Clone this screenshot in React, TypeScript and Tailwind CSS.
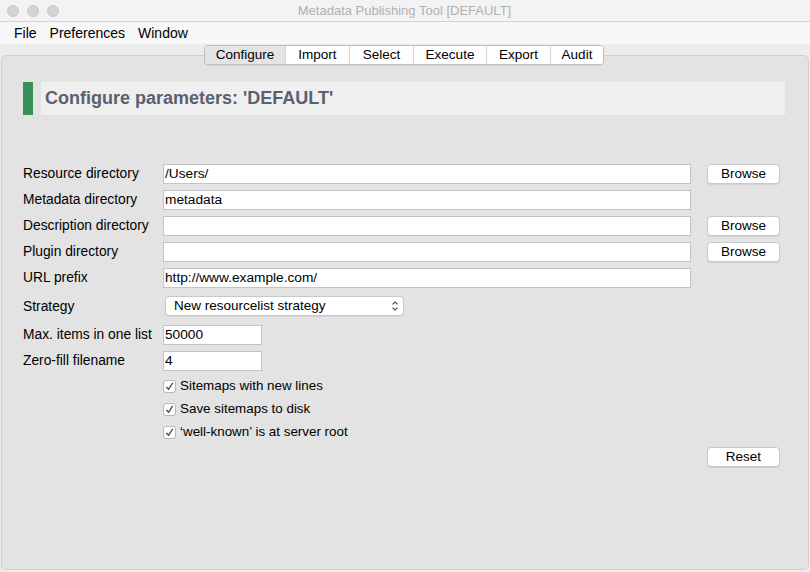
import React from 'react';

const font = { fontFamily: '"Liberation Sans", Arial, sans-serif' };

const tabs = ['Configure', 'Import', 'Select', 'Execute', 'Export', 'Audit'];
const tabWidths = ['w-[80px]', 'w-[64px]', 'w-[64px]', 'w-[73px]', 'w-[64px]', 'w-[53px]'];

function Field({ value = '', wide = true }: { value?: string; wide?: boolean }) {
  return (
    <div
      className={`h-[20px] bg-white border border-[#c4c4c4] px-[1px] flex items-center text-[13.7px] text-black ${
        wide ? 'w-[528px]' : 'w-[99px]'
      }`}
    >
      {value}
    </div>
  );
}

function MacButton({ label }: { label: string }) {
  return (
    <div className="h-[20px] w-[73px] bg-white border border-[#c8c8c8] rounded-[4px] shadow-[0_1px_0_rgba(0,0,0,0.08)] flex items-center justify-center text-[13.5px] text-black">
      {label}
    </div>
  );
}

function Check({ label }: { label: string }) {
  return (
    <div className="flex items-center h-[23px]">
      <div className="w-[13px] h-[13px] bg-white border border-[#b8b8b8] rounded-[3px] flex items-center justify-center">
        <svg viewBox="0 0 12 12" className="w-[11px] h-[11px]">
          <path d="M2.5 6.5 L5 9 L9.5 2" fill="none" stroke="#444" strokeWidth="1.4" />
        </svg>
      </div>
      <span className="ml-[4px] text-[13.4px] text-black">{label}</span>
    </div>
  );
}

export default function App() {
  const rows: { label: string; value: string; browse: boolean }[] = [
    { label: 'Resource directory', value: '/Users/', browse: true },
    { label: 'Metadata directory', value: 'metadata', browse: false },
    { label: 'Description directory', value: '', browse: true },
    { label: 'Plugin directory', value: '', browse: true },
    { label: 'URL prefix', value: 'http://www.example.com/', browse: false },
  ];

  return (
    <div className="w-[810px] h-[572px] bg-[#ececec] flex flex-col overflow-hidden" style={font}>
      {/* title bar */}
      <div className="h-[22px] bg-[#f3f3f3] border-b border-[#d2d2d2] flex items-center relative shrink-0">
        <div className="flex gap-[8px] pl-[7px]">
          <span className="w-[12px] h-[12px] rounded-full bg-[#d4d4d4] border border-[#c8c8c8]" />
          <span className="w-[12px] h-[12px] rounded-full bg-[#d4d4d4] border border-[#c8c8c8]" />
          <span className="w-[12px] h-[12px] rounded-full bg-[#d4d4d4] border border-[#c8c8c8]" />
        </div>
        <div className="flex-1 text-center text-[13px] text-[#b0b0b0] pr-[60px]">
          Metadata Publishing Tool [DEFAULT]
        </div>
      </div>

      {/* menu bar */}
      <div className="h-[22px] bg-[#f7f7f7] flex items-center text-[14px] text-black shrink-0">
        <span className="ml-[14px]">File</span>
        <span className="ml-[13px]">Preferences</span>
        <span className="ml-[13px]">Window</span>
      </div>

      {/* tabs */}
      <div className="flex justify-start pl-[204px] mt-[1px] -mb-[10px] relative z-10 shrink-0">
        <div className="flex h-[20px] border border-[#bdbdbd] rounded-[4px] overflow-hidden bg-white shadow-[0_1px_0_rgba(0,0,0,0.06)]">
          {tabs.map((t, i) => (
            <div
              key={t}
              className={`${tabWidths[i]} flex items-center justify-center text-[13.5px] text-black ${
                i === 0 ? 'bg-[#e4e4e4]' : 'bg-white'
              } ${i > 0 ? 'border-l border-[#d6d6d6]' : ''}`}
            >
              {t}
            </div>
          ))}
        </div>
      </div>

      {/* panel */}
      <div className="mx-[1px] mb-[2px] flex-1 bg-[#e3e3e3] border border-[#d0d0d0] rounded-[5px] pl-[21px] pr-[22px] pt-[26px] flex flex-col">
        <div className="flex h-[33px] w-[762px]">
          <div className="w-[10px] bg-[#3b8f58]" />
          <div className="ml-[8px] flex-1 bg-[#efefef] flex items-center pl-[4px] text-[18px] font-bold text-[#5a6070]">
            Configure parameters: 'DEFAULT'
          </div>
        </div>

        <div className="mt-[49px] flex flex-col gap-[6px]">
          {rows.map((r) => (
            <div key={r.label} className="flex items-center h-[20px]">
              <div className="w-[140px] text-[13.8px] text-black pt-[1px]">{r.label}</div>
              <Field value={r.value} />
              <div className="ml-[16px]">{r.browse && <MacButton label="Browse" />}</div>
            </div>
          ))}
        </div>

        <div className="flex items-center h-[20px] mt-[8px]">
          <div className="w-[140px] text-[13.8px] text-black pt-[2px]">Strategy</div>
          <div className="ml-[2px] w-[239px] h-[20px] bg-white border border-[#c8c8c8] rounded-[4px] shadow-[0_1px_0_rgba(0,0,0,0.06)] flex items-center pl-[8px] pr-[4px] text-[13.5px] text-black">
            <span className="flex-1">New resourcelist strategy</span>
            <svg viewBox="0 0 10 14" className="w-[8px] h-[12px]">
              <path d="M2 5 L5 2 L8 5 M2 9 L5 12 L8 9" fill="none" stroke="#333" strokeWidth="1.3" />
            </svg>
          </div>
        </div>

        <div className="flex items-center h-[20px] mt-[9px]">
          <div className="w-[140px] text-[13.8px] text-black pt-[1px]">Max. items in one list</div>
          <Field value="50000" wide={false} />
        </div>
        <div className="flex items-center h-[20px] mt-[6px]">
          <div className="w-[140px] text-[13.8px] text-black pt-[1px]">Zero-fill filename</div>
          <Field value="4" wide={false} />
        </div>

        <div className="ml-[140px] mt-[4px] flex flex-col">
          <Check label="Sitemaps with new lines" />
          <Check label="Save sitemaps to disk" />
          <Check label="‘well-known’ is at server root" />
        </div>

        <div className="flex mt-[3px]">
          <div className="ml-[684px]">
            <MacButton label="Reset" />
          </div>
        </div>
      </div>
    </div>
  );
}
